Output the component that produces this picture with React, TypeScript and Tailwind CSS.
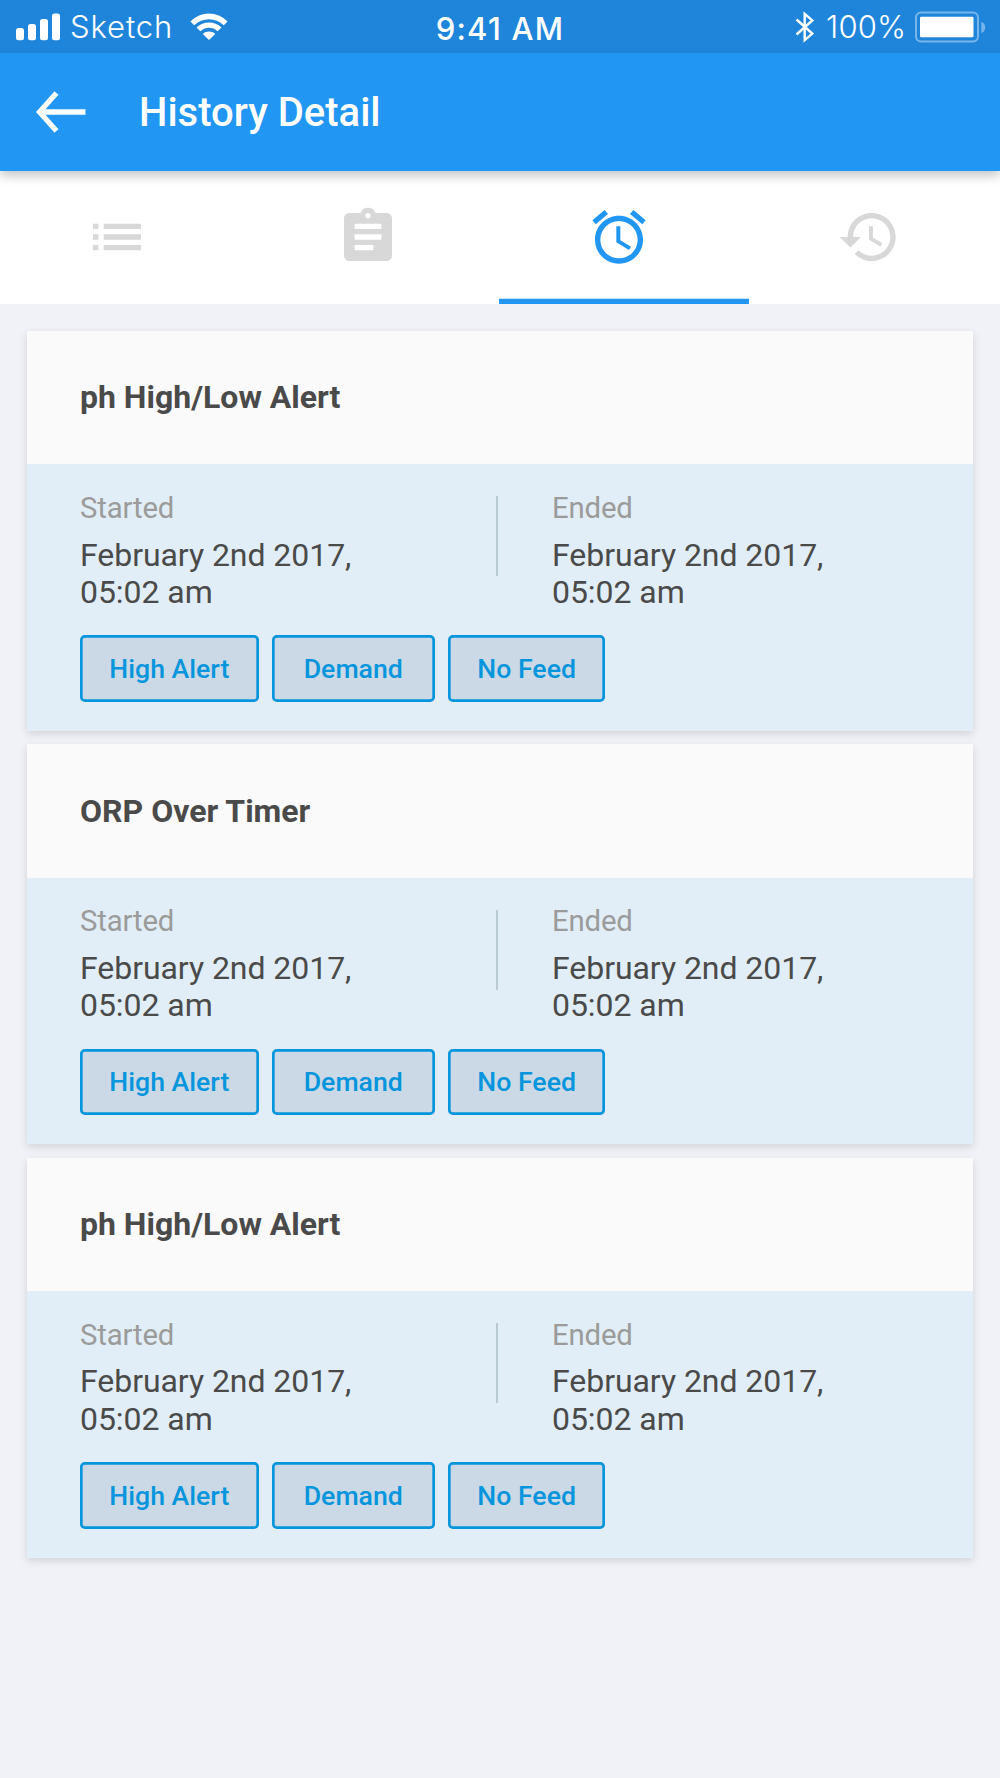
const tabs = [
  {
    name: "List",
    active: false,
    path: "M3 13h2v-2H3v2zm0 4h2v-2H3v2zm0-8h2V7H3v2zm4 4h14v-2H7v2zm0 4h14v-2H7v2zM7 7v2h14V7H7z",
  },
  {
    name: "Report",
    active: false,
    path: "M19 3h-4.18C14.4 1.84 13.3 1 12 1c-1.3 0-2.4.84-2.82 2H5c-1.1 0-2 .9-2 2v14c0 1.1.9 2 2 2h14c1.1 0 2-.9 2-2V5c0-1.1-.9-2-2-2zm-7 0c.55 0 1 .45 1 1s-.45 1-1 1-1-.45-1-1 .45-1 1-1zm2 14H7v-2h7v2zm3-4H7v-2h10v2zm0-4H7V7h10v2z",
  },
  {
    name: "Alerts",
    active: true,
    path: "M22 5.72l-4.6-3.86-1.29 1.53 4.6 3.86L22 5.72zM7.88 3.39L6.6 1.86 2 5.71l1.29 1.53 4.59-3.85zM12.5 8H11v6l4.75 2.85.75-1.23-4-2.37V8zM12 4c-4.97 0-9 4.03-9 9s4.02 9 9 9c4.97 0 9-4.03 9-9s-4.03-9-9-9zm0 16c-3.87 0-7-3.13-7-7s3.13-7 7-7 7 3.13 7 7-3.13 7-7 7z",
  },
  {
    name: "History",
    active: false,
    path: "M13 3c-4.97 0-9 4.03-9 9H1l3.89 3.89.07.14L9 12H6c0-3.87 3.13-7 7-7s7 3.13 7 7-3.13 7-7 7c-1.93 0-3.68-.79-4.94-2.06l-1.42 1.42C8.27 19.99 10.51 21 13 21c4.97 0 9-4.03 9-9s-4.03-9-9-9zm-1 5v5l4.28 2.54.72-1.21-3.5-2.08V8H12z",
  },
];

const alerts = ["ph High/Low Alert", "ORP Over Timer", "ph High/Low Alert"];

function StatusBar() {
  return (
    <div className="grid h-[53.33px] grid-cols-[1fr_auto_1fr] items-center bg-[#1f85db] font-['Inter',sans-serif] text-white">
      <div className="flex items-center pl-4">
        <svg className="h-7 w-11" viewBox="0 0 44 28" fill="currentColor">
          <rect x="0" y="15" width="8" height="12.3" rx="2.5" />
          <rect x="12" y="11" width="8" height="16.3" rx="2.5" />
          <rect x="24" y="6" width="8" height="21.3" rx="2.5" />
          <rect x="36" y="0.5" width="8" height="26.8" rx="2.5" />
        </svg>
        <span className="ml-[10px] w-[103px] text-[31px] leading-none font-[350] tracking-[0.9px]">Sketch</span>
        <svg className="ml-[17px] h-7 w-[38px]" viewBox="0 0 38 28" fill="currentColor">
          <path d="M0.5 8.5C10.5-2.2 27.5-2.2 37.5 8.5L33.8 12.2C25.8 4.2 12.2 4.2 4.2 12.2Z" />
          <path d="M6.5 14.6C13.5 7.8 24.5 7.8 31.5 14.6L27.6 18.2C22.6 13.7 15.4 13.7 10.4 18.2Z" />
          <path d="M12.8 21C16.4 17.8 21.6 17.8 25.2 21L19 27Z" />
        </svg>
      </div>
      <span className="pt-1 text-[31px] leading-none font-medium tracking-[1.25px]">9:41 AM</span>
      <div className="flex items-center justify-end pr-[14px]">
        <svg className="h-8 w-5" viewBox="0 0 20 32" fill="none" stroke="currentColor" strokeWidth="2.4">
          <path d="M1.5 8.5L17.3 22.6L9.7 29.2V2.8L17.3 9.4L1.5 23.5" />
        </svg>
        <span className="ml-[11px] w-[80px] text-[31px] leading-none font-[350] tracking-[0.2px]">100%</span>
        <svg className="ml-[9px] h-8 w-[71px]" viewBox="0 0 71 32">
          <rect x="1" y="1.5" width="62" height="29" rx="5" fill="none" stroke="#fff" strokeOpacity=".4" strokeWidth="2" />
          <rect x="5" y="5.8" width="53.5" height="20.5" rx="1.3" fill="#fff" />
          <path d="M66.3 11C71.5 12 71.5 21 66.3 22Z" fill="#fff" fillOpacity=".4" />
        </svg>
      </div>
    </div>
  );
}

function Moment({ label }: { label: string }) {
  return (
    <div className="whitespace-nowrap">
      <div className="text-[29.33px] leading-[34.67px] tracking-[-0.15px] text-[#9b9b9b]">{label}</div>
      <div className="mt-[11px] text-[32px] leading-[37.33px] tracking-[-0.05px] text-[#4a4a4a]">
        February 2nd 2017,
        <br />
        05:02 am
      </div>
    </div>
  );
}

function Tag({ children, width }: { children: string; width: string }) {
  return (
    <span
      className={`flex h-[66.67px] items-center justify-center rounded-[5px] bg-[#cad9e5] pt-px text-[26.67px] font-medium whitespace-nowrap text-[#0595dd] shadow-[inset_0_0_0_2.67px_#0595dd] ${width}`}
    >
      {children}
    </span>
  );
}

function AlertCard({ title }: { title: string }) {
  return (
    <section className="h-[400px] shadow-[0_3px_8px_rgba(0,0,0,0.13)]">
      <h2 className="flex h-[133.33px] items-center bg-[#fafafa] px-[53.33px] pb-[0.5px] text-[32px] font-bold text-[#4a4a4a]">
        {title}
      </h2>
      <div className="h-[266.67px] bg-[#e1eef7] px-[53.33px] pt-[26.67px]">
        <div className="grid grid-cols-[416px_2px_1fr]">
          <Moment label="Started" />
          <span className="mt-[5.5px] h-20 bg-[#b9cad4]" />
          <div className="pl-[54px]">
            <Moment label="Ended" />
          </div>
        </div>
        <div className="mt-[24px] flex gap-[13.33px]">
          <Tag width="w-[178.67px]">High Alert</Tag>
          <Tag width="w-[162.67px]">Demand</Tag>
          <Tag width="w-[157.33px]">No Feed</Tag>
        </div>
      </div>
    </section>
  );
}

export default function App() {
  return (
    <div className="h-[1778px] w-[1000px] overflow-hidden bg-[#f0f2f7] font-['Roboto',sans-serif]">
      <header className="relative z-10 h-[171px] bg-[#2196f3] shadow-[0_5px_10px_rgba(0,0,0,0.22)]">
        <StatusBar />
        <div className="flex h-[117.67px] items-center pl-9 text-white">
          <svg className="h-11 w-[50px]" viewBox="0 0 50 44" fill="none" stroke="currentColor">
            <path d="M49.5 22H4" strokeWidth="5.33" />
            <path d="M20.5 3L3.5 22L20.5 41" strokeWidth="5.33" />
          </svg>
          <h1 className="ml-[53px] pt-[2px] text-[40px] leading-none font-medium">History Detail</h1>
        </div>
      </header>
      <nav className="h-[133.33px] bg-white">
        <div className="-ml-[2.67px] flex h-full">
          {tabs.map((tab) => (
            <button
              key={tab.name}
              aria-label={tab.name}
              className={`flex h-full w-[250.67px] shrink-0 items-center justify-center pr-[10.67px] pb-[0.67px] ${
                tab.active
                  ? "text-[#2196f3] shadow-[inset_0_-5.33px_0_#2196f3]"
                  : "text-[#d8d8d8]"
              }`}
            >
              <svg className="size-16" viewBox="0 0 24 24" fill="currentColor">
                <path d={tab.path} />
              </svg>
            </button>
          ))}
        </div>
      </nav>
      <main className="flex flex-col gap-[13.33px] px-[26.67px] pt-[26.67px]">
        {alerts.map((title, i) => (
          <AlertCard key={i} title={title} />
        ))}
      </main>
    </div>
  );
}
